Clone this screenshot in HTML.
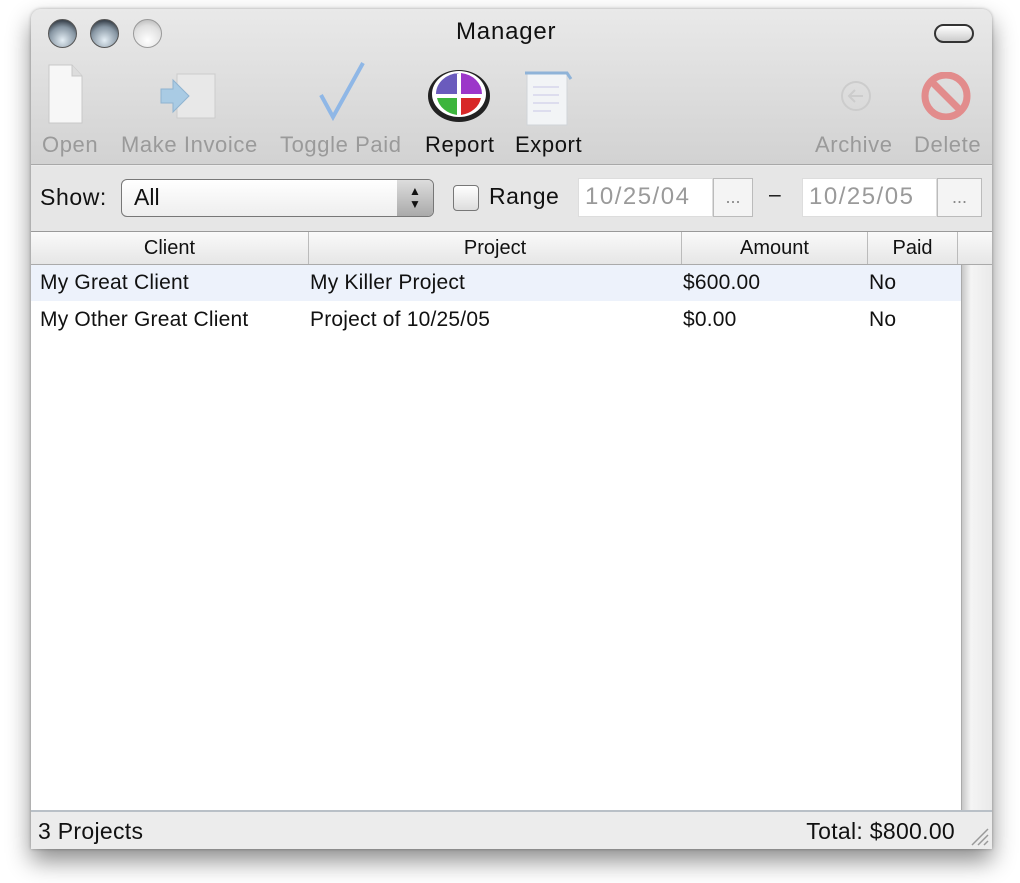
<!DOCTYPE html>
<html><head><style>
*{margin:0;padding:0;box-sizing:border-box}
body{width:1020px;height:883px;background:#fff;font-family:"Liberation Sans",sans-serif;position:relative;overflow:hidden;color:#111}
.win{position:absolute;left:31px;top:9px;width:961px;height:840px;border-radius:10px 10px 0 0;box-shadow:0 12px 24px rgba(0,0,0,.45),0 0 3px rgba(0,0,0,.3);background:#ececec;overflow:hidden}
.top{position:absolute;left:0;top:0;width:961px;height:156px;background:linear-gradient(#e9e9e9,#d2d2d2);border-bottom:1px solid #a8a8a8}
.a{position:absolute;white-space:nowrap;font-size:21px}
.btn{position:absolute;top:10px;width:29px;height:29px;border-radius:50%;background:radial-gradient(circle at 50% 75%,#e4eef5,#8796a3 55%,#3d4650 80%);border:1px solid #555}
.t{font-size:22px;letter-spacing:0.6px}
.g{color:#9a9a9a}
.filt{position:absolute;left:0;top:157px;width:961px;height:66px;background:#e6e6e6;border-bottom:1px solid #999}
.hdr{position:absolute;left:0;top:223px;width:961px;height:33px;background:linear-gradient(#fafafa,#e6e6e6);border-bottom:1px solid #aaa}
.col{position:absolute;top:0;height:32px;border-right:1px solid #bbb;text-align:center;font-size:20px;line-height:32px}
.list{position:absolute;left:0;top:256px;width:930px;height:545px;background:#fff}
.sb{position:absolute;left:930px;top:256px;width:31px;height:545px;background:linear-gradient(90deg,#c8c8c8,#f4f4f4 30%,#eaeaea);border-left:1px solid #aaa}
.row{position:absolute;left:0;width:930px;height:36px;font-size:21px;line-height:36px;letter-spacing:0.2px}
.row span{position:absolute}
.stat{position:absolute;left:0;top:801px;width:961px;height:39px;background:#ececec;border-top:2px solid #b9c0c7;font-size:23px;line-height:38px;letter-spacing:0.3px}
</style></head><body>
<div class="win">
<div class="top">
 <div class="btn" style="left:17px"></div>
 <div class="btn" style="left:59px"></div>
 <div class="btn" style="left:102px;background:radial-gradient(circle at 50% 75%,#fff,#e0e0e0 60%,#aaa);border-color:#999"></div>
 <div class="a" style="left:425px;top:9px;font-size:24px;letter-spacing:0.8px">Manager</div>
 <div style="position:absolute;left:903px;top:15px;width:40px;height:19px;border:2px solid #333;border-radius:10px;background:linear-gradient(#fff,#ccc)"></div>
 <svg style="position:absolute;left:14px;top:52px" width="40" height="65"><path d="M4 4H27L37 15V62H4Z" fill="#f7f7f7" stroke="#c8c8c8"/><path d="M27 4V15H37" fill="#ddd" stroke="#c8c8c8"/></svg>
 <svg style="position:absolute;left:126px;top:55px" width="62" height="60"><rect x="20" y="10" width="38" height="44" fill="#e8e8e8" stroke="#ccc"/><path d="M4 25H16V16L32 32L16 48V39H4Z" fill="#a9cbe4" stroke="#8fb3d0"/></svg>
 <svg style="position:absolute;left:286px;top:50px" width="52" height="62"><path d="M4 36L16 58L46 4" fill="none" stroke="#8fb7e6" stroke-width="4"/></svg>
 <svg style="position:absolute;left:396px;top:60px" width="64" height="54"><ellipse cx="32" cy="27" rx="31" ry="26" fill="#222"/><ellipse cx="32" cy="25" rx="27" ry="23" fill="#fff"/><path d="M32 4A24 21 0 0 0 9 25H30V4Z" fill="#6a5bbd"/><path d="M34 4A24 21 0 0 1 55 25H34Z" fill="#9c36c9"/><path d="M10 29H30V46A24 21 0 0 1 10 29Z" fill="#3cb53c"/><path d="M34 29H54A24 21 0 0 1 34 46Z" fill="#d82828"/></svg>
 <svg style="position:absolute;left:490px;top:58px" width="54" height="60"><rect x="6" y="6" width="40" height="52" fill="#f2f4f6" stroke="#d0d4d8"/><path d="M4 6H46L50 12" fill="none" stroke="#8fb3d8" stroke-width="3"/><path d="M12 20H38M12 28H38M12 36H38M12 44H30" stroke="#dde" stroke-width="2"/></svg>
 <svg style="position:absolute;left:808px;top:70px" width="34" height="34"><circle cx="17" cy="17" r="14" fill="none" stroke="#ccc" stroke-width="2"/><path d="M24 17H10M16 11L10 17L16 23" fill="none" stroke="#ccc" stroke-width="2"/></svg>
 <svg style="position:absolute;left:889px;top:63px" width="52" height="48"><circle cx="26" cy="24" r="21" fill="none" stroke="#e28c8c" stroke-width="7"/><path d="M12 10L40 38" stroke="#e28c8c" stroke-width="7"/></svg>
 <div class="a t g" style="left:11px;top:123px">Open</div>
 <div class="a t g" style="left:90px;top:123px">Make Invoice</div>
 <div class="a t g" style="left:249px;top:123px">Toggle Paid</div>
 <div class="a t" style="left:394px;top:123px">Report</div>
 <div class="a t" style="left:484px;top:123px">Export</div>
 <div class="a t g" style="left:784px;top:123px">Archive</div>
 <div class="a t g" style="left:883px;top:123px">Delete</div>
</div>
<div class="filt">
 <div class="a" style="left:9px;top:18px;font-size:23px;letter-spacing:0.6px">Show:</div>
 <div style="position:absolute;left:90px;top:13px;width:313px;height:38px;border:1px solid #777;border-radius:6px;background:linear-gradient(#fff,#eee)"></div>
 <div style="position:absolute;left:366px;top:14px;width:36px;height:36px;border-radius:0 5px 5px 0;background:linear-gradient(#ddd,#aaa);font-size:12px;text-align:center;line-height:13px;padding-top:5px">▲<br>▼</div>
 <div class="a" style="left:103px;top:18px;font-size:23px">All</div>
 <div style="position:absolute;left:422px;top:19px;width:26px;height:26px;border:1px solid #777;border-radius:4px;background:linear-gradient(#fff,#ddd)"></div>
 <div class="a" style="left:458px;top:17px;font-size:23px;letter-spacing:0.5px">Range</div>
 <div style="position:absolute;left:547px;top:12px;width:135px;height:39px;background:#fff;border:1px solid #ddd"></div>
 <div class="a g" style="left:554px;top:17px;font-size:24px;letter-spacing:1.5px">10/25/04</div>
 <div style="position:absolute;left:682px;top:12px;width:40px;height:39px;border:1px solid #bbb;background:#f4f4f4;text-align:center;color:#888;font-size:18px;line-height:36px">...</div>
 <div class="a" style="left:738px;top:17px">–</div>
 <div style="position:absolute;left:771px;top:12px;width:135px;height:39px;background:#fff;border:1px solid #ddd"></div>
 <div class="a g" style="left:778px;top:17px;font-size:24px;letter-spacing:1.5px">10/25/05</div>
 <div style="position:absolute;left:906px;top:12px;width:45px;height:39px;border:1px solid #bbb;background:#f4f4f4;text-align:center;color:#888;font-size:18px;line-height:36px">...</div>
</div>
<div class="hdr">
 <div class="col" style="left:0;width:278px">Client</div>
 <div class="col" style="left:278px;width:373px">Project</div>
 <div class="col" style="left:651px;width:186px">Amount</div>
 <div class="col" style="left:837px;width:90px">Paid</div>
</div>
<div class="list">
 <div class="row" style="top:0;background:#edf2fb"><span style="left:9px">My Great Client</span><span style="left:279px">My Killer Project</span><span style="left:652px">$600.00</span><span style="left:838px">No</span></div>
 <div class="row" style="top:37px"><span style="left:9px">My Other Great Client</span><span style="left:279px">Project of 10/25/05</span><span style="left:652px">$0.00</span><span style="left:838px">No</span></div>
</div>
<div class="sb"></div>
<div class="stat"><span style="position:absolute;left:7px">3 Projects</span><span style="position:absolute;right:37px">Total: $800.00</span>
<svg style="position:absolute;right:2px;bottom:2px" width="24" height="24"><path d="M22 6L6 22M22 12L12 22M22 18L18 22" stroke="#999" stroke-width="1.5"/></svg></div>
</div>
</body></html>
